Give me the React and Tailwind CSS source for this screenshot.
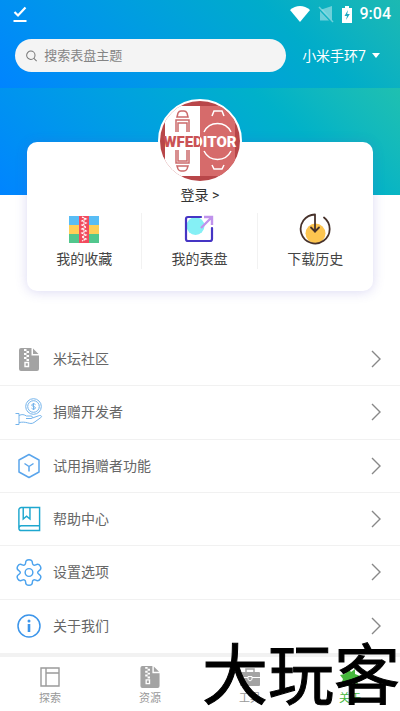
import { useState } from 'react';

const TEXT_FONT = "font-['Roboto','Noto_Sans_CJK_SC',sans-serif]";

function ZipFileIcon({ className }) {
  return (
    <svg viewBox="0 0 20 23" className={className} fill="none" aria-hidden="true">
      <path d="M2 0h10.500v7.500H20V21a2 2 0 0 1-2 2H2a2 2 0 0 1-2-2V2a2 2 0 0 1 2-2z" fill="#a3a3a3" />
      <path d="M14 0.500l5.500 5.500H14z" fill="#a3a3a3" />
      <path d="M5 1h2.500v2H5zM7.500 3H10v2H7.500zM5 5h2.500v2H5zM7.500 7H10v2H7.500zM5 9h2.500v2H5zM7.500 11H10v2H7.500z" fill="#fff" />
      <path d="M6 14.500h3.500v4H6z" stroke="#fff" strokeWidth="1.400" />
    </svg>
  );
}

function DonateIcon() {
  return (
    <svg viewBox="0 0 28 28" className="h-7 w-7" fill="none" stroke="#74b4ec" strokeWidth="1" aria-hidden="true">
      <circle cx="18.500" cy="8.500" r="7.800" />
      <circle cx="18.500" cy="8.500" r="5.800" />
      <path d="M20.500 6.700c-.6-1.100-3.800-1.200-3.800.4 0 1.700 3.800 1 3.800 2.800 0 1.600-3.300 1.500-4 .3M18.500 5v7" />
      <path d="M0.500 15.500h3.500v11H0.500M4 17.500c3-1.500 5-1 7.500.5h4.500c2 0 2 2.500 0 2.500h-5M17.500 20l6-2.200c2.500-1 4 .5 2.200 1.900L19 24.500c-2 1.500-4 1-6.500.3-3-.8-5-.8-8.500-.3" />
    </svg>
  );
}

function HexagonIcon() {
  return (
    <svg viewBox="0 0 24 26" className="h-[26px] w-6" fill="none" stroke="#5aa5ec" strokeWidth="1.500" strokeLinejoin="round" aria-hidden="true">
      <path d="M12 1.500l10 5.500v12l-10 5.500L2 19V7z" />
      <path d="M7.500 10.500l4.500 3 4.500-3M12 13.500v5" />
    </svg>
  );
}

function BookIcon() {
  return (
    <svg viewBox="0 0 24 27" className="h-[26px] w-6" fill="none" stroke="#1ea7cf" strokeWidth="1.500" aria-hidden="true">
      <path d="M23 20.500V1.500H4a2.500 2.500 0 0 0-2.500 2.500v19A2.500 2.500 0 0 0 4 25.500h19v-5H4A2.500 2.500 0 0 0 1.500 23" />
      <path d="M6 2v11.500l3.500-3 3.500 3V2" />
    </svg>
  );
}

function GearIcon() {
  return (
    <svg viewBox="0 0 26 28" className="h-[27px] w-[26px]" fill="none" stroke="#4ca3ee" strokeWidth="1.500" strokeLinejoin="round" aria-hidden="true">
      <path d="M9.500 4c0-4.300 7-4.300 7 0 0 2 1.500 3 3.500 2 4-2 7.300 3.800 3.500 6-2 1.200-2 2.800 0 4 3.800 2.200.5 8-3.500 6-2-1-3.500 0-3.500 2 0 4.300-7 4.300-7 0 0-2-1.500-3-3.500-2-4 2-7.300-3.800-3.500-6 2-1.200 2-2.800 0-4C-1.300 9.800 2 4 6 6c2 1 3.500 0 3.500-2z" />
      <circle cx="13" cy="14" r="4" />
    </svg>
  );
}

function InfoIcon() {
  return (
    <svg viewBox="0 0 24 24" className="h-6 w-6" fill="none" aria-hidden="true">
      <circle cx="12" cy="12" r="11" stroke="#3c95ea" strokeWidth="1.500" />
      <circle cx="12" cy="7" r="1.500" fill="#3c95ea" />
      <path d="M10.700 10h2.600v8h-2.600z" fill="#3c95ea" />
    </svg>
  );
}

function CollectionIcon() {
  return (
    <svg viewBox="0 0 30 27" className="h-[27px] w-[30px]" aria-hidden="true">
      <path d="M0 0h30v9H0z" fill="#58bdf5" />
      <path d="M0 9h30v9H0z" fill="#ffcf58" />
      <path d="M0 18h30v9H0z" fill="#52c78d" />
      <path d="M10 0h10v27H10z" fill="#f24b5e" />
      <path d="M13 1l4 2-4 2 4 2-4 2 4 2-4 2 4 2-4 2 4 2-4 2 4 2-4 2" fill="none" stroke="#fff" strokeWidth="1.300" strokeDasharray="2 .5" />
    </svg>
  );
}

function MyDialIcon() {
  return (
    <svg viewBox="0 0 30 28" className="h-7 w-[30px]" fill="none" aria-hidden="true">
      <circle cx="11.500" cy="11" r="9" fill="#85f0f5" />
      <path d="M17 2H4a2 2 0 0 0-2 2v20a2 2 0 0 0 2 2h22a2 2 0 0 0 2-2V13" stroke="#4535c4" strokeWidth="2.200" strokeLinecap="round" />
      <path d="M17 13L27.500 2.500M20 2h8v8" stroke="#c092ec" strokeWidth="2.400" />
    </svg>
  );
}

function HistoryIcon() {
  return (
    <svg viewBox="0 0 32 32" className="h-8 w-8" fill="none" stroke="#47322b" strokeWidth="1.800" strokeLinecap="round" strokeLinejoin="round" aria-hidden="true">
      <circle cx="16.500" cy="20.500" r="10" fill="#fdc550" stroke="none" />
      <path d="M16 18.500V1.500A14.500 14.500 0 1 0 25 4.500" />
      <path d="M12 14.500l4 4 4-4" />
    </svg>
  );
}

function Avatar() {
  return (
    <svg viewBox="0 0 80 80" className="size-full" fill="none" aria-hidden="true">
      <defs>
        <linearGradient id="wordmark" gradientUnits="userSpaceOnUse" x1="0" y1="0" x2="80" y2="0">
          <stop offset="0.5" stopColor="#ca5255" />
          <stop offset="0.5" stopColor="#fff" />
        </linearGradient>
      </defs>
      <path d="M0 0h80v80H0z" fill="#b84649" />
      <path d="M5 5h35v70H5z" fill="#fff" />
      <path d="M40 5h35v70H40z" fill="#d66b6b" />
      <g stroke="#cb6a6b" strokeWidth="1.500">
        <path d="M17 16l1-4q1-2 3-2h3q2 0 3 2l1 4zM16 31V19h13v12M18 31V22h9v9M16 49v13h13V49M18 49v11h9V49M17 65h11l-1 3q-1 2-3 2h-3q-2 0-3-2z" />
      </g>
      <g stroke="#fff" strokeWidth="1.500">
        <path d="M52 15l2-5h8l2 5M44 31a15 15 0 0 1 27 0M44 50a15 15 0 0 0 27 0M52 64l2 4h8l2-4" />
      </g>
      <text
        x="40"
        y="46"
        textAnchor="middle"
        fontSize="15"
        fontWeight="900"
        fontFamily="Roboto, sans-serif"
        fill="url(#wordmark)"
      >
        WFEDITOR
      </text>
    </svg>
  );
}

function StatusBar() {
  return (
    <div className="flex h-7 items-center pr-[9px] pl-[13px] text-white">
      <svg viewBox="0 0 14 17" className="h-[17px] w-3.5" fill="none" stroke="currentColor" strokeWidth="2.200" aria-hidden="true">
        <path d="M1.500 6l3.500 3.500L12.500 1.500M0.500 15h13" />
      </svg>
      <div className="ml-auto flex items-center">
        <svg viewBox="0 0 20 16" className="h-4 w-5" fill="currentColor" aria-hidden="true">
          <path d="M0 4C6-1.300 14-1.300 20 4L10 16z" />
        </svg>
        <svg viewBox="0 0 16 17" className="ml-2 h-[17px] w-4" aria-hidden="true">
          <path d="M14 0v14L3.500 3.500zM2 5l9 9.500H2z" fill="currentColor" opacity=".4" />
          <path d="M1 1l14 15" stroke="currentColor" strokeWidth="1.500" opacity=".4" />
        </svg>
        <svg viewBox="0 0 10 17" className="ml-2 h-[17px] w-2.5" aria-hidden="true">
          <path d="M3 0h4v2h3v15H0V2h3z" fill="currentColor" />
          <path d="M6 4L2.500 10H5l-1 4 3.800-6H5.200z" fill="#1ba9c2" />
        </svg>
        <span className="ml-2 text-base font-medium">9:04</span>
      </div>
    </div>
  );
}

const shortcuts = [
  { label: '我的收藏', Icon: CollectionIcon },
  { label: '我的表盘', Icon: MyDialIcon },
  { label: '下载历史', Icon: HistoryIcon },
];

const menu = [
  { label: '米坛社区', icon: <ZipFileIcon className="h-[23px] w-5" /> },
  { label: '捐赠开发者', icon: <DonateIcon /> },
  { label: '试用捐赠者功能', icon: <HexagonIcon /> },
  { label: '帮助中心', icon: <BookIcon /> },
  { label: '设置选项', icon: <GearIcon /> },
  { label: '关于我们', icon: <InfoIcon /> },
];

const tabs = [
  {
    label: '探索',
    icon: (
      <svg viewBox="0 0 20 20" className="size-5" fill="none" stroke="#9b9b9b" strokeWidth="1.400" aria-hidden="true">
        <path d="M1 1h18v18H1zM6 1v18M6 6h13" />
      </svg>
    ),
  },
  { label: '资源', icon: <ZipFileIcon className="h-[22px] w-5" /> },
  {
    label: '工具',
    icon: (
      <svg viewBox="0 0 20 20" className="size-5" aria-hidden="true">
        <path d="M6 5V2h8v3" fill="none" stroke="#a3a3a3" strokeWidth="1.500" />
        <path d="M1 5h18a1 1 0 0 1 1 1v12a1 1 0 0 1-1 1H1a1 1 0 0 1-1-1V6a1 1 0 0 1 1-1z" fill="#a3a3a3" />
        <path d="M0 10.500h8M12 10.500h8M8 9.500h4v3l-2 1.500-2-1.500z" fill="none" stroke="#fff" />
      </svg>
    ),
  },
  {
    label: '关于',
    icon: (
      <svg viewBox="0 0 20 20" className="size-5" fill="#46b83c" aria-hidden="true">
        <path d="M8 1l3 4 4-3 0 5 5 2-4 3 2 5-6-1-3 4-2-4-6 1 2-5-3-4 5-1z" />
      </svg>
    ),
  },
];

export default function App() {
  const [keyword, setKeyword] = useState('');
  const [activeTab, setActiveTab] = useState('关于');

  return (
    <div className={`relative min-h-screen overflow-hidden bg-white ${TEXT_FONT}`}>
      <header className="bg-linear-45 from-[#0084ff] to-[#1cb9b2] pb-4">
        <StatusBar />
        <div className="mt-[11px] flex items-center pr-5 pl-[15px]">
          <label className="flex h-[33px] flex-1 items-center gap-[7px] rounded-full bg-[#f4f4f4] pl-[11px]">
            <svg viewBox="0 0 12 12" className="size-3" fill="none" stroke="#777" strokeWidth="1.100" aria-hidden="true">
              <circle cx="5.200" cy="5.200" r="4.500" />
              <path d="M8.500 8.500l3 3" />
            </svg>
            <input
              type="search"
              aria-label="搜索表盘主题"
              value={keyword}
              onChange={(e) => setKeyword(e.target.value)}
              placeholder="搜索表盘主题"
              className="w-full min-w-0 bg-transparent text-[13px] text-[#555] outline-none placeholder:text-[#858585]"
            />
          </label>
          <button type="button" className="ml-4 flex items-center gap-1.5 text-sm text-white">
            小米手环7
            <svg viewBox="0 0 8 5" className="h-[5px] w-2" fill="currentColor" aria-hidden="true">
              <path d="M0 0h8L4 5z" />
            </svg>
          </button>
        </div>
      </header>

      <main>
        <div className="h-[107px] bg-linear-45 from-[#0084ff] to-[#1fc0b0]" />
        <section className="relative mx-[27px] -mt-[53px] flex flex-col rounded-[10px] bg-white pb-[22px] shadow-[0_1px_12px_rgba(90,80,200,0.22)]">
          <div className="-mt-[43px] size-[84px] self-center overflow-hidden rounded-full border-2 border-white bg-white">
            <Avatar />
          </div>
          <button type="button" className="mt-0.5 self-center text-sm text-[#333]">登录 &gt;</button>
          <div className="mt-2 grid grid-cols-3 divide-x divide-[#f2f2f2]">
            {shortcuts.map(({ label, Icon }) => (
              <button key={label} type="button" className="flex flex-col items-center gap-1 text-sm text-[#444]">
                <span className="flex h-8 items-center"><Icon /></span>
                {label}
              </button>
            ))}
          </div>
        </section>

        <ul className="mt-[42px] grid h-80 grid-rows-6 divide-y divide-[#f1f1f1]">
          {menu.map((item) => (
            <li key={item.label}>
              <button type="button" className="flex h-full w-full items-center pr-[19px] pl-[15px] text-left text-sm text-[#666]">
                <span className="mr-2.5 flex w-7 justify-center">{item.icon}</span>
                {item.label}
                <svg viewBox="0 0 10 18" className="ml-auto h-[18px] w-2.5" fill="none" stroke="#888" strokeWidth="1.400" aria-hidden="true">
                  <path d="M1 1l8 8-8 8" />
                </svg>
              </button>
            </li>
          ))}
        </ul>
      </main>

      <nav className="grid grid-cols-4 border-t-4 border-[#f2f2f2] pt-2">
        {tabs.map((tab) => (
          <button
            key={tab.label}
            type="button"
            onClick={() => setActiveTab(tab.label)}
            className={`flex flex-col items-center gap-[3px] text-[11px] ${activeTab === tab.label ? 'text-[#46b83c]' : 'text-[#999]'}`}
          >
            <span className="flex h-[23px] items-center">{tab.icon}</span>
            {tab.label}
          </button>
        ))}
      </nav>

      <div className="pointer-events-none absolute right-0 bottom-2 font-['Noto_Sans_CJK_SC',sans-serif] text-[66px] leading-[66px] whitespace-nowrap text-black [-webkit-text-stroke:1px_black]">
        大玩客
      </div>
    </div>
  );
}
